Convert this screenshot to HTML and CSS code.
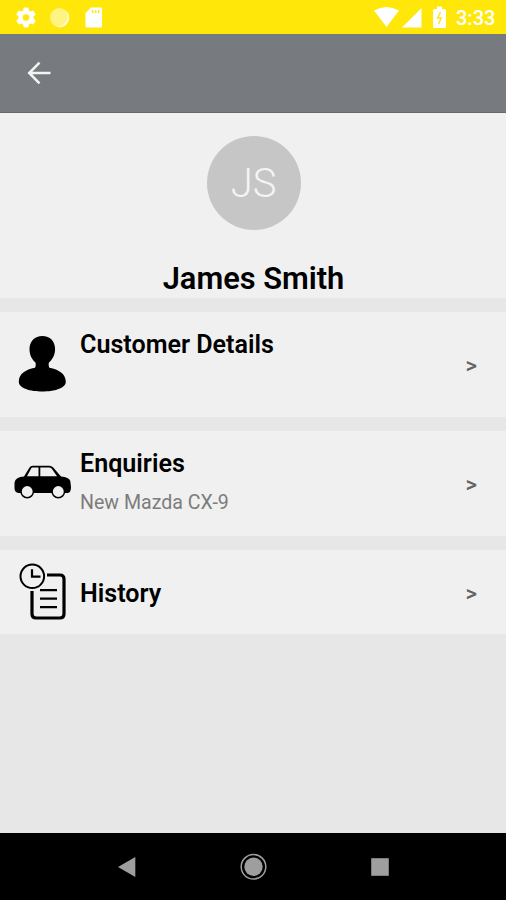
FILE: index.html
```html
<!DOCTYPE html>
<html lang="en">

<head>
	<meta charset="UTF-8">
	<title>James Smith</title>
	<link rel="stylesheet" href="styles.css">
</head>

<body>
	<div class="statusBar">
		<svg class="statusLeft" width="110" height="34" viewBox="0 0 110 34">
			<path d="M10 2.300h4l.6 2.800 2 1.100 2.700-.9 2 3.500-2.100 1.900v2.400l2.100 1.900-2 3.500-2.700-.9-2 1.100-.6 2.800h-4l-.6-2.800-2-1.100-2.700.9-2-3.500 2.100-1.900v-2.400L2.700 8.800l2-3.500 2.700.9 2-1.100zM12 8.200a3.700 3.700 0 1 0 0 7.400 3.700 3.700 0 0 0 0-7.400z" transform="translate(14 5.600)" fill="#fff" stroke="#fff" stroke-width=".7" stroke-linejoin="round" fill-rule="evenodd"/>
			<circle cx="59.500" cy="17.500" r="9.500" fill="#fff383"/>
			<path d="M66.500 11a9.500 9.500 0 0 1-11 15.200A10.500 10.500 0 0 0 66.500 11z" fill="#fffbd0"/>
			<path d="M91 7.500h9.500q1.500 0 1.500 1.500V26q0 1.500-1.500 1.500H87q-1.500 0-1.500-1.500V13z" fill="#fff"/>
			<path d="M92.700 10v3M95.700 10v3M98.700 10v3" stroke="#ffe70a" stroke-width="1.400"/>
		</svg>
		<svg class="statusRight" width="75" height="34" viewBox="0 0 75 34">
			<path d="M0 10.500Q12.500 3.500 25 10.500L12.500 27z" fill="#fff"/>
			<path d="M47.500 8v19.500H28z" fill="#fff"/>
			<path d="M63 6.500h5V9h2.500q1.500 0 1.500 1.500V26.500q0 1.500-1.500 1.500h-10Q59 28 59 26.500V10.500Q59 9 60.500 9H63z" fill="#fff"/>
			<path d="M66.500 12l-2.800 6h3.500l-2.700 6" fill="none" stroke="#ffe70a" stroke-width="1.400"/>
		</svg>
		<span class="clock">3:33</span>
	</div>
	<div class="toolbar">
		<svg width="24" height="24" viewBox="0 0 24 24">
			<path d="M23.500 12H2.500M12.500 1.700L2.200 12l10.300 10.300" fill="none" stroke="#f4f4f4" stroke-width="2.500"/>
		</svg>
	</div>
	<div class="content">
		<div class="profile">
			<div class="avatar">JS</div>
			<h1>James Smith</h1>
		</div>
		<div class="row">
			<svg class="icon" width="58" height="58" viewBox="0 0 58 58">
				<path d="M28.300 0C36 0 41.100 5.300 41.100 13c0 5.500-2.500 10.500-6 13.300-.8 1.600-.5 4.200.3 5.500 9.500 1.800 16.400 6.200 16.400 14C51.800 52.500 40 55.500 28.300 55.500S4.800 52.500 4.800 45.800c0-7.800 6.700-12.200 16.200-14 .8-1.300 1.100-3.900.3-5.500-3.500-2.800-5.800-7.800-5.800-13.300C15.500 5.300 21 0 28.300 0z"/>
			</svg>
			<div class="info">
				<h2>Customer Details</h2>
				<p></p>
			</div>
			<span class="arrow">&gt;</span>
		</div>
		<div class="row">
			<svg class="icon" width="58" height="58" viewBox="0 0 58 58">
				<path d="M10 21.500L15.500 12.500q1-1.700 3-1.700h17q2 0 3.500 1.500L47 21.500q8 .5 9.300 4.500l.7 6q.2 5.500-3.300 6H4.500Q.5 37.500.5 33v-5.500Q1.500 22 10 21.500z"/>
				<path d="M13 21.300l4-7.500q.5-1.200 1.700-1.200h5.800v8.700zM26.300 12.600H35q1.700 0 2.800 1.200l5.200 7.500H26.300z" fill="#f0f0f0"/>
				<circle cx="13.200" cy="36.500" r="6.200" fill="#f0f0f0" stroke="#000" stroke-width="1.500"/>
				<circle cx="44.300" cy="36.500" r="6.200" fill="#f0f0f0" stroke="#000" stroke-width="1.500"/>
			</svg>
			<div class="info">
				<h2>Enquiries</h2>
				<p>New Mazda CX-9</p>
			</div>
			<span class="arrow">&gt;</span>
		</div>
		<div class="row small">
			<svg class="icon" width="58" height="58" viewBox="0 0 58 58">
				<path d="M33 12H46q4 0 4 4v35q0 4-4 4H22Q18 55 18 51V28" fill="none" stroke="#000" stroke-width="3.200"/>
				<path d="M26 27.200h17M26 35.600h17M26 44.200h17" stroke="#000" stroke-width="2.200"/>
				<circle cx="18.300" cy="13.300" r="11.800" fill="#f0f0f0" stroke="#000" stroke-width="2"/>
				<path d="M18 6.300v7.300h8.500" fill="none" stroke="#000" stroke-width="2.200"/>
			</svg>
			<div class="info">
				<h2>History</h2>
			</div>
			<span class="arrow">&gt;</span>
		</div>
	</div>
	<div class="navBar">
		<svg width="28" height="28" viewBox="0 0 28 28">
			<path d="M6 14L23.300 4v20z" fill="#9e9e9e"/>
		</svg>
		<svg width="28" height="28" viewBox="0 0 28 28">
			<circle cx="14.500" cy="13.800" r="9.200" fill="#9e9e9e"/>
			<circle cx="14.500" cy="13.800" r="12.300" fill="none" stroke="#9e9e9e" stroke-width="1.500"/>
		</svg>
		<svg width="28" height="28" viewBox="0 0 28 28">
			<path d="M5.200 5.200h17.600v17.600H5.200z" fill="#9e9e9e"/>
		</svg>
	</div>
</body>

</html>
```
FILE: styles.css
```css
body {
	font-family: Roboto, "Liberation Sans", sans-serif;
	margin: 0;
	height: 100vh;
	display: flex;
	flex-direction: column;
	background: #e7e7e7;
	overflow: hidden;
}

h1, h2, p {
	margin: 0;
}

svg {
	display: block;
	flex: none;
}

.statusBar {
	height: 34px;
	display: flex;
	align-items: center;
	background: #ffe70a;
}

.statusRight {
	margin-left: auto;
}

.clock {
	width: 57px;
	box-sizing: border-box;
	padding: 2px 0 0 7px;
	font-size: 20px;
	font-weight: 500;
	color: #fff;
}

.toolbar {
	height: 79px;
	box-sizing: border-box;
	padding-left: 27px;
	display: flex;
	align-items: center;
	background: #777a7e;
	border-bottom: 1px solid #66686a;
}

.content {
	flex: 1;
	display: flex;
	flex-direction: column;
	gap: 14px;
}

.profile {
	height: 185px;
	box-sizing: border-box;
	padding: 23px 0 0 1px;
	display: flex;
	flex-direction: column;
	align-items: center;
	background: #f0f0f0;
}

.avatar {
	width: 94px;
	height: 94px;
	border-radius: 50%;
	background: #c6c6c6;
	color: #f4f4f4;
	font-size: 40px;
	font-weight: 350;
	line-height: 95px;
	text-align: center;
}

h1 {
	margin-top: 31px;
	font-size: 30.8px;
	line-height: 36px;
	font-weight: 600;
}

.row {
	height: 105px;
	box-sizing: border-box;
	padding: 0 29px 0 14px;
	display: flex;
	align-items: center;
	background: #f0f0f0;
}

.row.small {
	height: 84px;
}

.icon {
	margin-right: 8px;
}

.info {
	flex: 1;
	padding-top: 7px;
}

.small .info {
	padding-top: 4px;
}

h2 {
	font-size: 25.1px;
	line-height: 30px;
	font-weight: 600;
}

.info p {
	height: 46px;
	box-sizing: border-box;
	padding-top: 11px;
	font-size: 19.6px;
	line-height: 26px;
	color: #7c7c7c;
}

.arrow {
	padding-top: 2px;
	font-size: 22px;
	font-weight: 500;
	color: #646464;
}

.navBar {
	height: 67px;
	box-sizing: border-box;
	padding: 0 112px;
	display: flex;
	align-items: center;
	justify-content: space-between;
	background: #000;
}
```
